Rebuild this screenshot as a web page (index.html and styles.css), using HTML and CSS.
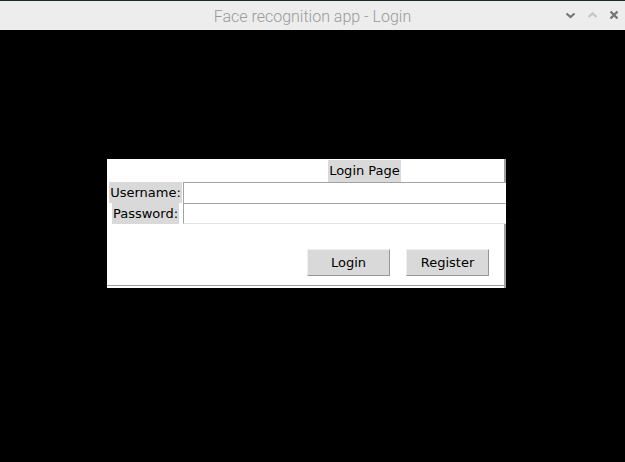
FILE: index.html
```html
<!DOCTYPE html>
<html>
<head>
<meta charset="utf-8">
<link rel="stylesheet" href="styles.css">
</head>
<body>
<div class="titlebar">
  <div class="title">Face recognition app - Login</div>
  <div class="controls">
    <svg class="ctl" width="60" height="30" viewBox="0 0 60 30">
      <polyline points="6.5,13.5 10.5,17 14.5,13.5" fill="none" stroke="#757575" stroke-width="2.2"/>
      <polyline points="28.5,17 32.5,13.5 36.5,17" fill="none" stroke="#c4c4c4" stroke-width="2.2"/>
      <path d="M50.5,11.5 L57.5,18.5 M57.5,11.5 L50.5,18.5" fill="none" stroke="#757575" stroke-width="2.4"/>
    </svg>
  </div>
</div>
<div class="main">
  <div class="frame">
    <div class="row-head">
      <div class="lbl head">Login Page</div>
    </div>
    <div class="row">
      <div class="lblcell"><div class="lbl">Username:</div></div>
      <div class="entry"></div>
    </div>
    <div class="row">
      <div class="lblcell"><div class="lbl">Password:</div></div>
      <div class="entry last"></div>
    </div>
    <div class="buttons">
      <div class="btn">Login</div>
      <div class="btn">Register</div>
    </div>
  </div>
</div>
</body>
</html>
```
FILE: styles.css
```css
html, body {
  margin: 0;
  padding: 0;
  background: #000;
  width: 625px;
  height: 462px;
  overflow: hidden;
}
.titlebar {
  height: 29px;
  border-top: 1px solid #1f2b2c;
  background: #ededed;
  position: relative;
  display: flex;
  justify-content: center;
  align-items: center;
}
.title {
  font-family: Roboto, "Liberation Sans", sans-serif;
  font-weight: 300;
  font-size: 16px;
  color: #9a9a9a;
  margin-top: 1px;
}
.controls {
  position: absolute;
  right: 0;
  top: -1px;
  width: 65px;
  height: 30px;
}
.ctl { display: block; }
.main {
  padding-top: 129px;
  padding-left: 107px;
}
.frame {
  width: 399px;
  height: 129px;
  background: #fff;
  box-shadow: inset -2px 0 0 #a0a0a0, inset 0 -2px 0 #fff, inset 0 -3px 0 #a0a0a0;
  display: flex;
  flex-direction: column;
  font-family: "DejaVu Sans", sans-serif;
  font-size: 13px;
  color: #000;
}
.row-head {
  height: 23px;
  display: flex;
}
.lbl {
  background: #d9d9d9;
  height: 21px;
  line-height: 21px;
  padding: 0 2px;
  white-space: nowrap;
}
.head {
  margin-top: 1px;
  margin-left: 221px;
  width: 73px;
  height: 22px;
  line-height: 22px;
  padding: 0;
  text-align: center;
}
.row {
  height: 21px;
  display: flex;
}
.lblcell {
  width: 75px;
  margin-left: 1px;
  display: flex;
  justify-content: center;
}
.lblcell .lbl { padding: 0 1px; }
.entry {
  flex: 1;
  height: 20px;
  background: #fff;
  border-top: 1px solid #a3a3a3;
  border-left: 1px solid #a3a3a3;
}
.entry.last {
  height: 19px;
  border-bottom: 1px solid #e3e3e3;
}
.buttons {
  display: flex;
  justify-content: flex-end;
  gap: 16px;
  margin-top: 25px;
  padding-right: 17px;
}
.btn {
  width: 81px;
  height: 25px;
  line-height: 25px;
  text-align: center;
  background: #d9d9d9;
  border-top: 1px solid #efefef;
  border-left: 1px solid #efefef;
  border-right: 1px solid #959595;
  border-bottom: 1px solid #959595;
}
```
